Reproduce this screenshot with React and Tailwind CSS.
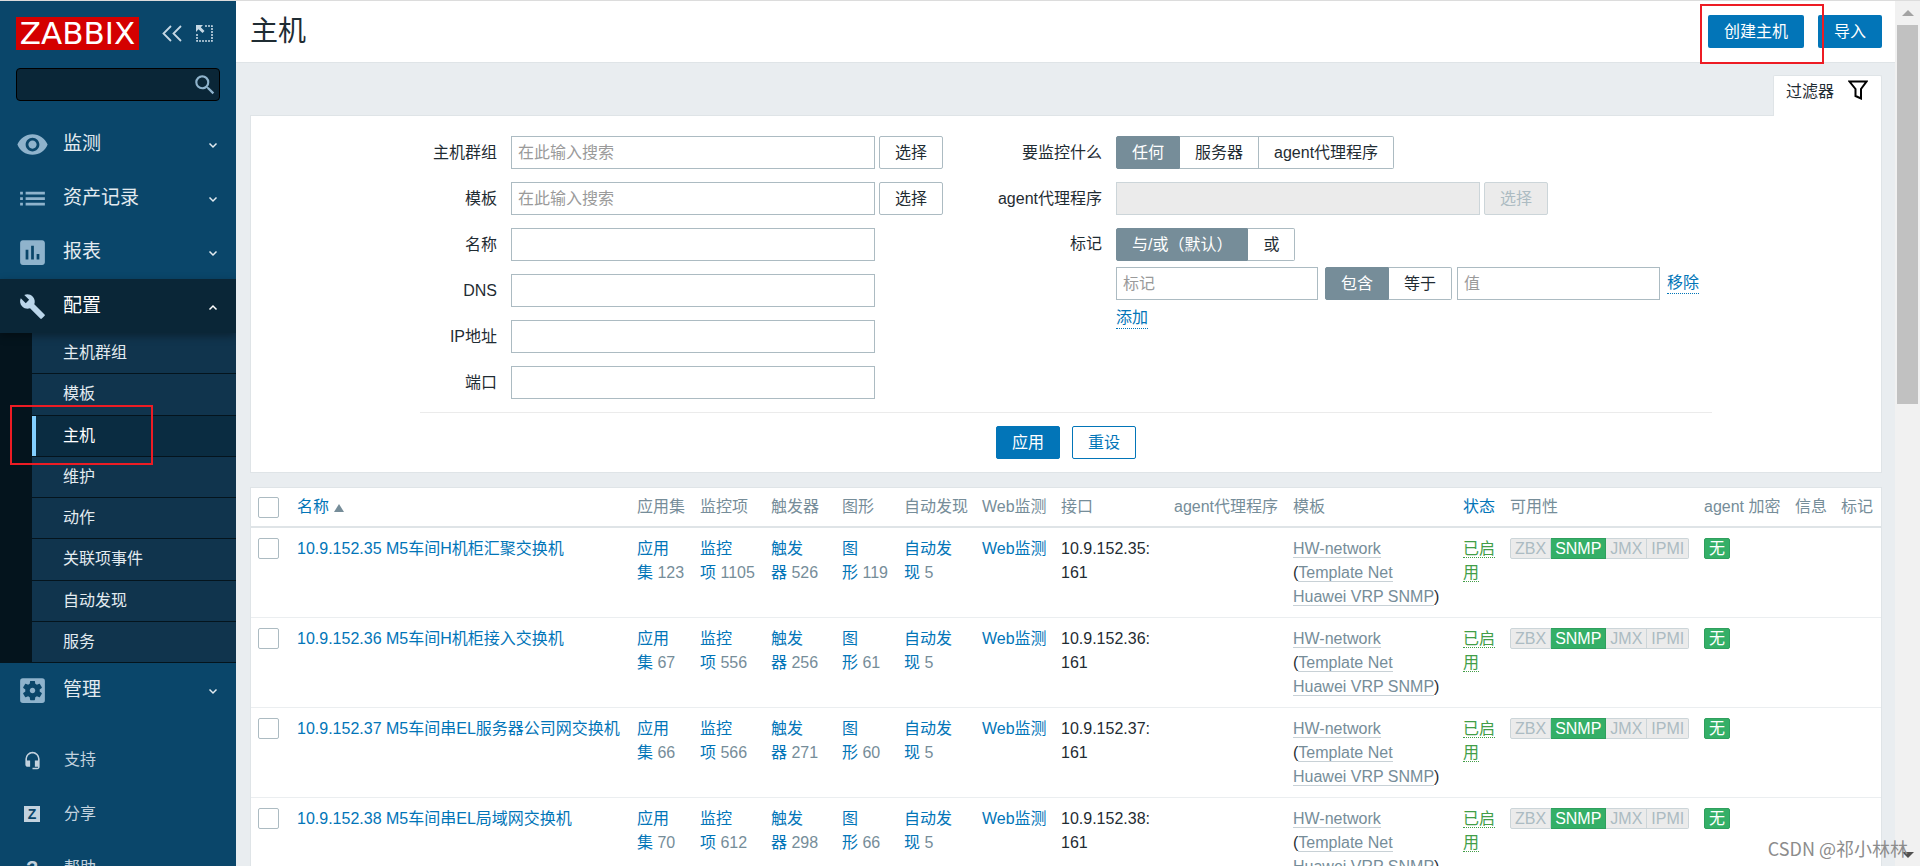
import React, { useState } from "react";
import {
  MdVisibility,
  MdList,
  MdAssessment,
  MdBuild,
  MdSettingsApplications,
  MdSearch,
  MdHeadsetMic,
} from "react-icons/md";

const subMenu = ["主机群组", "模板", "主机", "维护", "动作", "关联项事件", "自动发现", "服务"];

const hosts = [
  { ip: "10.9.152.35", name: "M5车间H机柜汇聚交换机", apps: 123, items: 1105, triggers: 526, graphs: 119 },
  { ip: "10.9.152.36", name: "M5车间H机柜接入交换机", apps: 67, items: 556, triggers: 256, graphs: 61 },
  { ip: "10.9.152.37", name: "M5车间串EL服务器公司网交换机", apps: 66, items: 566, triggers: 271, graphs: 60 },
  { ip: "10.9.152.38", name: "M5车间串EL局域网交换机", apps: 70, items: 612, triggers: 298, graphs: 66 },
];

const inputClass = "h-[33px] border border-[#acbbc2] bg-white px-1.5 outline-none placeholder:text-[#9a9a9a]";
const labelClass = "text-right leading-6";
const cellClass = "border-b border-[#ebeef0] px-[7px] pt-[9px] pb-2 align-top";

const Chevron = ({ up }) => (
  <svg width="10" height="7" viewBox="0 0 10 7" fill="none" stroke="currentColor" strokeWidth="1.5">
    <path d={up ? "M1.5 5.5 5 2l3.5 3.5" : "M1.5 1.5 5 5l3.5-3.5"} />
  </svg>
);

const MenuItem = ({ icon, text, open }) => (
  <a
    href="#"
    className={`relative flex h-[54px] items-center pl-4 pr-[18px] text-[19px] ${
      open
        ? "bg-[#0a2637] text-white shadow-[0_3px_8px_rgba(0,0,0,0.35)]"
        : "bg-[#0a466a] text-[#e3ebf0]"
    }`}
  >
    <span className={`flex w-8 justify-center ${open ? "text-[#bbd6ea]" : "text-[#8fb3cc]"}`}>{icon}</span>
    <span className="ml-[15px] flex-1">{text}</span>
    <span className="mt-0.5">
      <Chevron up={open} />
    </span>
  </a>
);

const FooterItem = ({ icon, text }) => (
  <a href="#" className="flex h-[54px] items-center pl-4 text-[#c3d2de]">
    <span className="flex w-8 justify-center">{icon}</span>
    <span className="ml-4">{text}</span>
  </a>
);

const Sidebar = () => (
  <aside className="w-[236px] shrink-0 overflow-hidden bg-[#0a466a]">
    <div className="flex items-center px-4 pt-4">
      <a href="#" className="flex h-[33px] w-[123px] items-center justify-center bg-[#d40000]">
        <span className="font-['DejaVu_Sans'] text-[31px] leading-none text-white">ZABBIX</span>
      </a>
      <button aria-label="collapse" className="ml-[23px] text-[#c6d8e4]">
        <svg width="20" height="17" viewBox="0 0 20 17" fill="none" stroke="currentColor" strokeWidth="1.8">
          <path d="M9 1 1.5 8.5 9 16M19 1l-7.500 7.500L19 16" />
        </svg>
      </button>
      <button aria-label="hide" className="ml-3.5 text-[#c6d8e4]">
        <svg width="17" height="17" viewBox="0 0 17 17" fill="none" stroke="currentColor">
          <path d="M9 1h7v15H1V9" strokeWidth="1.6" strokeDasharray="2 1" />
          <path d="M0 0h7L4.800 2.200 8.500 6 6.500 8 2.500 4.300 0 7z" fill="currentColor" stroke="none" />
        </svg>
      </button>
    </div>
    <div className="mx-4 mt-[18px] flex h-[33px] items-center rounded border border-black bg-[#0a2637] pr-px">
      <input type="text" aria-label="搜索" className="min-w-0 flex-1 bg-transparent px-2 text-white outline-none" />
      <button aria-label="search" className="text-[#8fb3cc]">
        <MdSearch size={26} />
      </button>
    </div>
    <nav className="mt-4">
      <MenuItem icon={<MdVisibility size={33} className="shrink-0" />} text="监测" />
      <MenuItem icon={<MdList size={33} className="shrink-0" />} text="资产记录" />
      <MenuItem icon={<MdAssessment size={33} className="shrink-0" />} text="报表" />
      <MenuItem icon={<MdBuild size={27} />} text="配置" open />
      <ul className="grid h-[330px] grid-rows-8 bg-[#04141d] pl-8">
        {subMenu.map((text) => (
          <li key={text} className="border-b border-[#04141d]">
            <a
              href="#"
              className={`flex h-full items-center ${
                text === "主机"
                  ? "border-l-4 border-[#82cfff] bg-[#0a2c41] pl-[27px] text-white"
                  : "bg-[#10344d] pl-[31px] text-[#e3ebf0]"
              }`}
            >
              {text}
            </a>
          </li>
        ))}
      </ul>
      <MenuItem icon={<MdSettingsApplications size={33} className="shrink-0" />} text="管理" />
    </nav>
    <div className="mt-4">
      <FooterItem icon={<MdHeadsetMic size={19} />} text="支持" />
      <FooterItem
        icon={
          <span className="flex size-4 items-center justify-center bg-[#c3d2de] text-sm font-bold leading-none text-[#0a466a]">
            Z
          </span>
        }
        text="分享"
      />
      <FooterItem icon={<span className="text-xl font-bold">?</span>} text="帮助" />
    </div>
  </aside>
);

const Segmented = ({ name, options }) => {
  const [value, setValue] = useState(options[0]);

  return (
    <div className="flex h-[33px]">
      {options.map((option) => (
        <label
          key={option}
          className={`relative flex items-center border-y border-r px-[15px] first:rounded-l-xs first:border-l last:rounded-r-xs ${
            value === option ? "border-[#768d99] bg-[#768d99] text-white" : "border-[#acbbc2] bg-white"
          }`}
        >
          <input
            type="radio"
            name={name}
            checked={value === option}
            onChange={() => setValue(option)}
            className="absolute inset-0 opacity-0"
          />
          {option}
        </label>
      ))}
    </div>
  );
};

const SelectButton = ({ disabled }) => (
  <button
    disabled={disabled}
    className="ml-1 h-[33px] rounded-xs border border-[#acbbc2] bg-white px-[15px] disabled:border-[#ccd5d9] disabled:bg-[#ebebeb] disabled:text-[#acbbc2]"
  >
    选择
  </button>
);

const Filter = () => (
  <form className="border border-[#dfe4e7] bg-white" onSubmit={(e) => e.preventDefault()}>
    <div className="mx-auto max-w-[1292px]">
      <div className="flex gap-[53px] border-b border-[#ebebeb] pb-[13px] pt-5">
        <div className="grid grid-cols-[77px_auto] items-center gap-x-3.5 gap-y-[13px]">
          <label htmlFor="groups" className={labelClass}>主机群组</label>
          <div className="flex">
            <input id="groups" placeholder="在此输入搜索" className={`${inputClass} w-[364px]`} />
            <SelectButton />
          </div>
          <label htmlFor="templates" className={labelClass}>模板</label>
          <div className="flex">
            <input id="templates" placeholder="在此输入搜索" className={`${inputClass} w-[364px]`} />
            <SelectButton />
          </div>
          <label htmlFor="name" className={labelClass}>名称</label>
          <input id="name" className={`${inputClass} w-[364px]`} />
          <label htmlFor="dns" className={labelClass}>DNS</label>
          <input id="dns" className={`${inputClass} w-[364px]`} />
          <label htmlFor="ip" className={labelClass}>IP地址</label>
          <input id="ip" className={`${inputClass} w-[364px]`} />
          <label htmlFor="port" className={labelClass}>端口</label>
          <input id="port" className={`${inputClass} w-[364px]`} />
        </div>

        <div className="grid grid-cols-[106px_auto] content-start items-center gap-x-3.5 gap-y-[13px]">
          <span className={labelClass}>要监控什么</span>
          <Segmented name="monitored_by" options={["任何", "服务器", "agent代理程序"]} />
          <label htmlFor="proxy" className={labelClass}>agent代理程序</label>
          <div className="flex">
            <input
              id="proxy"
              disabled
              className="h-[33px] w-[364px] border border-[#ccd5d9] bg-[#ebebeb] px-1.5"
            />
            <SelectButton disabled />
          </div>
          <span className={`${labelClass} self-start pt-1`}>标记</span>
          <div>
            <Segmented name="evaltype" options={["与/或（默认）", "或"]} />
            <div className="mt-1.5 flex items-center">
              <input aria-label="标记" placeholder="标记" className={`${inputClass} mr-[7px] w-[202px]`} />
              <Segmented name="operator" options={["包含", "等于"]} />
              <input aria-label="值" placeholder="值" className={`${inputClass} ml-[5px] mr-[7px] w-[203px]`} />
              <button className="border-b border-dotted border-[#0275b8] leading-5 text-[#0275b8]">移除</button>
            </div>
            <button className="mt-2 border-b border-dotted border-[#0275b8] leading-5 text-[#0275b8]">添加</button>
          </div>
        </div>
      </div>
      <div className="flex justify-center gap-3 py-[13px]">
        <button className="h-[33px] rounded-xs border border-[#0275b8] bg-[#0275b8] px-[15px] text-white">应用</button>
        <button className="h-[33px] rounded-xs border border-[#0275b8] bg-white px-[15px] text-[#0275b8]">重设</button>
      </div>
    </div>
  </form>
);

const Checkbox = ({ label }) => (
  <input
    type="checkbox"
    aria-label={label}
    className="mt-px block size-[21px] appearance-none rounded-xs border border-[#acbbc2] bg-white checked:bg-[#0275b8]"
  />
);

const CountCell = ({ text, count }) => (
  <td className={cellClass}>
    <a href="#" className="text-[#0275b8]">{text}</a>
    <span className="text-[#768d99]">{"\u00a0" + count}</span>
  </td>
);

const HostTable = () => (
  <table className="mt-3.5 w-full table-fixed border-separate border-spacing-0 border border-b-0 border-[#dfe4e7] bg-white leading-6">
    <colgroup>
      <col className="w-[39px]" />
      <col />
      <col className="w-[63px]" />
      <col className="w-[71px]" />
      <col className="w-[71px]" />
      <col className="w-[62px]" />
      <col className="w-[78px]" />
      <col className="w-[79px]" />
      <col className="w-[113px]" />
      <col className="w-[119px]" />
      <col className="w-[170px]" />
      <col className="w-[47px]" />
      <col className="w-[194px]" />
      <col className="w-[91px]" />
      <col className="w-[46px]" />
      <col className="w-[47px]" />
    </colgroup>
    <thead>
      <tr className="text-left text-[#768d99] *:whitespace-nowrap *:border-b-2 *:border-[#dfe4e7] *:px-[7px] *:py-[7px] *:font-normal">
        <th><Checkbox label="全选" /></th>
        <th>
          <a href="#" className="text-[#0275b8]">名称</a>
          <span className="ml-[5px] inline-block border-x-[5px] border-b-8 border-x-transparent border-b-[#768d99]" />
        </th>
        <th>应用集</th>
        <th>监控项</th>
        <th>触发器</th>
        <th>图形</th>
        <th>自动发现</th>
        <th>Web监测</th>
        <th>接口</th>
        <th>agent代理程序</th>
        <th>模板</th>
        <th><a href="#" className="text-[#0275b8]">状态</a></th>
        <th>可用性</th>
        <th>agent 加密</th>
        <th>信息</th>
        <th>标记</th>
      </tr>
    </thead>
    <tbody>
      {hosts.map((host) => (
        <tr key={host.ip}>
          <td className={cellClass}><Checkbox label={host.ip} /></td>
          <td className={cellClass}>
            <a href="#" className="whitespace-nowrap text-[#0275b8]">{host.ip} {host.name}</a>
          </td>
          <CountCell text="应用集" count={host.apps} />
          <CountCell text="监控项" count={host.items} />
          <CountCell text="触发器" count={host.triggers} />
          <CountCell text="图形" count={host.graphs} />
          <CountCell text="自动发现" count={5} />
          <td className={cellClass}><a href="#" className="whitespace-nowrap text-[#0275b8]">Web监测</a></td>
          <td className={cellClass}>{host.ip}:<wbr />161</td>
          <td className={cellClass}></td>
          <td className={cellClass}>
            <a href="#" className="border-b border-[#c8d1d6] leading-5 text-[#768d99]">HW-network</a>{" "}
            (<a href="#" className="border-b border-[#c8d1d6] leading-5 text-[#768d99]">Template Net Huawei VRP SNMP</a>)
          </td>
          <td className={cellClass}>
            <a href="#" className="border-b border-dotted border-[#429e47] text-[#429e47]">已启用</a>
          </td>
          <td className={cellClass}>
            <div className="mt-px flex h-[21px] text-[#acbbc2] *:flex *:items-center *:border-y *:border-r *:border-[#ccd5d9] *:bg-[#ebebeb] *:px-1">
              <span className="rounded-l-xs border-l">ZBX</span>
              <span className="border-[#2f9f5e]! bg-[#34af67]! text-white">SNMP</span>
              <span>JMX</span>
              <span className="rounded-r-xs">IPMI</span>
            </div>
          </td>
          <td className={cellClass}>
            <span className="mt-px flex h-[21px] w-[26px] items-center justify-center rounded-xs border border-[#2f9f5e] bg-[#34af67] text-white">
              无
            </span>
          </td>
          <td className={cellClass}></td>
          <td className={cellClass}></td>
        </tr>
      ))}
    </tbody>
  </table>
);

const Scrollbar = () => (
  <div className="flex w-[25px] shrink-0 flex-col items-center justify-between bg-[#f1f1f1]">
    <div className="flex h-[46.6%] w-full flex-col items-center">
      <span className="my-[9px] border-x-[6px] border-b-[6px] border-x-transparent border-b-[#a3a3a3]" />
      <span className="w-[21px] flex-1 bg-[#c1c1c1]" />
    </div>
    <span className="mb-2 border-x-[6px] border-t-[6px] border-x-transparent border-t-[#505050]" />
  </div>
);

const App = () => {
  return (
    <div className="relative flex h-screen overflow-hidden border-t border-[#dcdcdc] bg-[#e9edf0] font-['Liberation_Sans','Noto_Sans_CJK_SC',sans-serif] text-base text-[#1f2c33]">
      <Sidebar />
      <main className="min-w-0 flex-1">
        <header className="flex h-[62px] items-center justify-between border-b border-[#dfe4e7] bg-white pl-3.5 pr-[13px]">
          <h1 className="text-[28px] leading-9">主机</h1>
          <div className="flex gap-3.5">
            <button className="h-[33px] rounded-xs bg-[#0275b8] px-4 text-white">创建主机</button>
            <button className="h-[33px] rounded-xs bg-[#0275b8] px-4 text-white">导入</button>
          </div>
        </header>
        <div className="pl-3.5 pr-[13px] pt-3">
          <div className="relative -mb-px flex justify-end">
            <button className="flex h-[41px] items-start gap-3.5 rounded-t-xs border border-b-0 border-[#dfe4e7] bg-white pl-3 pr-[13px] pt-1 leading-6">
              过滤器
              <svg width="20" height="20" viewBox="0 0 20 20" fill="none" stroke="#000" strokeWidth="2">
                <path d="M1.500 1.500h17L13 9v9.500L7.500 16V9z" />
              </svg>
            </button>
          </div>
          <Filter />
          <HostTable />
        </div>
      </main>
      <Scrollbar />

      {/* highlight marks */}
      <div className="pointer-events-none absolute left-[10px] top-[404px] h-[60px] w-[143px] border-2 border-[#ed1c24]" />
      <div className="pointer-events-none absolute right-[96px] top-[3px] h-[60px] w-[124px] border-2 border-[#ed1c24]" />
      <span className="pointer-events-none absolute bottom-1.5 right-3 font-['Noto_Sans_CJK_SC',sans-serif] text-[18px] leading-6 text-[#8c8c8c]">
        CSDN @祁小林林
      </span>
    </div>
  );
};

export default App;
